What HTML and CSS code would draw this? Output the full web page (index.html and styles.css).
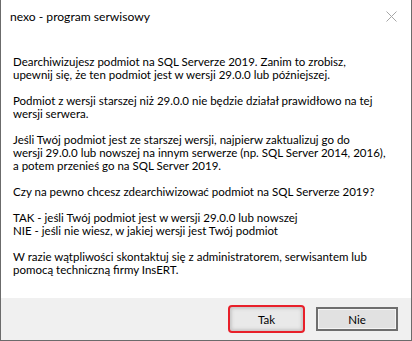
FILE: index.html
```html
<!DOCTYPE html>
<html>
	<head>
		<meta charset="UTF-8">
		<title>nexo - program serwisowy</title>
		<link rel="stylesheet" href="styles.css">
	</head>
	<body>
		<div class="window">
			<div class="titlebar">
				<span class="title">nexo - program serwisowy</span>
				<span class="close">
					<svg width="11" height="11" viewBox="0 0 11 11"><path d="M0.5 0.5L10.5 10.5M10.5 0.5L0.5 10.5" stroke="#a6a6a6" stroke-width="1" fill="none"/></svg>
				</span>
			</div>
			<div class="content">
				<p>Dearchiwizujesz podmiot na SQL Serverze 2019. Zanim to zrobisz,<br>upewnij się, że ten podmiot jest w wersji 29.0.0 lub późniejszej.</p>
				<p>Podmiot z wersji starszej niż 29.0.0 nie będzie działał prawidłowo na tej<br>wersji serwera.</p>
				<p>Jeśli Twój podmiot jest ze starszej wersji, najpierw zaktualizuj go do<br>wersji 29.0.0 lub nowszej na innym serwerze (np. SQL Server 2014, 2016),<br>a potem przenieś go na SQL Server 2019.</p>
				<p>Czy na pewno chcesz zdearchiwizować podmiot na SQL Serverze 2019?</p>
				<p>TAK - jeśli Twój podmiot jest w wersji 29.0.0 lub nowszej<br>NIE - jeśli nie wiesz, w jakiej wersji jest Twój podmiot</p>
				<p>W razie wątpliwości skontaktuj się z administratorem, serwisantem lub<br>pomocą techniczną firmy InsERT.</p>
			</div>
			<div class="footer">
				<button class="btn btn-focus">Tak</button>
				<button class="btn">Nie</button>
			</div>
		</div>
	</body>
</html>
```
FILE: styles.css
```css
html,body{margin: 0; padding: 0; background: #fff;}
body{font-family: Lato, "Noto Sans", sans-serif; font-size: 12px; color: #000;}
.window{height: 341px; box-sizing: border-box; border: 1px solid #6b6b6b; border-top: none; display: flex; flex-direction: column; background: #fff;}
.titlebar{height: 32px; display: flex; align-items: center; justify-content: space-between; padding: 0 10px 0 9px;}
.title{font-size: 12.1px; line-height: 14px; padding-top: 2px;}
.close{width: 11px; height: 11px; margin-right: 4px; display: flex;}
.content{padding: 23px 11px 0 12px; line-height: 13px; font-size: 11.5px;}
.content p{margin: 0 0 13px 0; white-space: nowrap;}
.footer{margin-top: auto; height: 42px; background: #f0f0f0; display: flex; justify-content: flex-end; align-items: center; padding: 0 13px 0 0; gap: 11px;}
.btn{font-family: inherit; font-size: 11.5px; width: 82px; height: 24px; margin: 0; padding: 0; background: #e1e1e1; border: 2px solid #6e6e6e; box-shadow: inset 0 0 0 1px #f4f4f4; color: #000;}
.btn-focus{width: 77px; height: 28px; border: 2px solid #e8202a; border-radius: 4px; background: #e9e9e9; box-shadow: inset 0 0 3px 2px #c9c9c9;}
```
